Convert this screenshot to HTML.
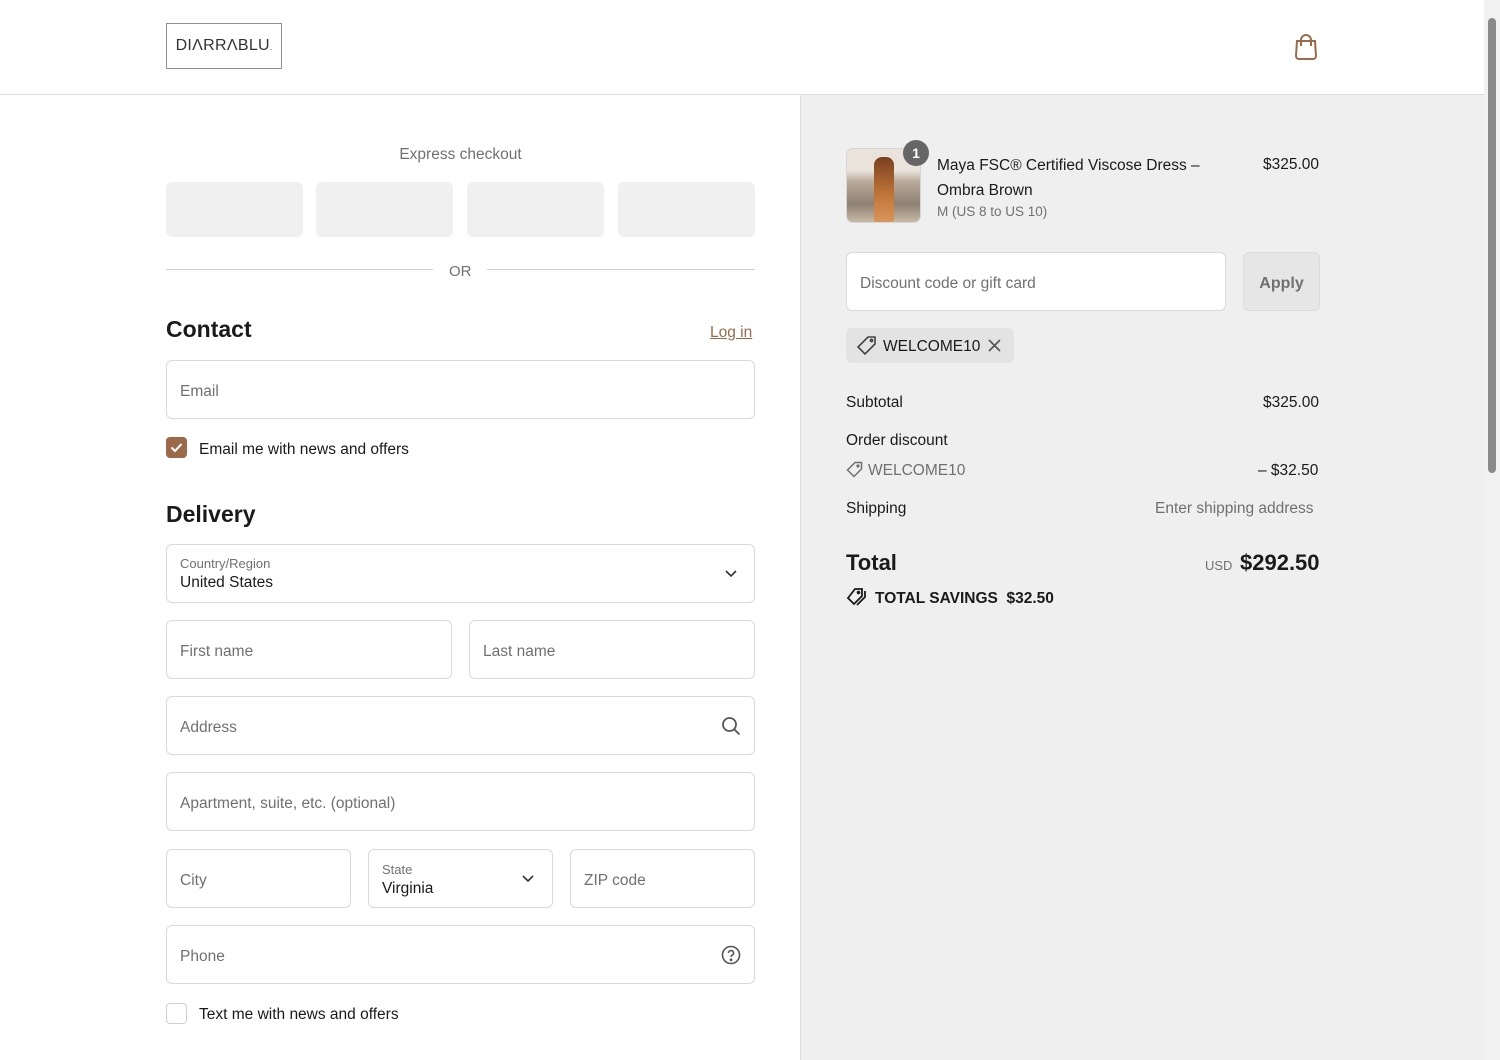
<!DOCTYPE html>
<html><head><meta charset="utf-8"><style>
*{box-sizing:border-box;margin:0;padding:0}
body{width:1500px;height:1060px;overflow:hidden;font-family:"Liberation Sans",sans-serif;color:#1a1a1a;background:#fff;position:relative;font-size:15px}
.a{position:absolute}
.t{margin-top:2px}
.hdr{left:0;top:0;width:1484px;height:95px;border-bottom:1px solid #dedede;background:#fff}
.logo{left:166px;top:23px;width:116px;height:46px;border:1.5px solid #8f8f8f;font-size:16px;letter-spacing:0.3px;color:#333;text-align:center;line-height:44px}
.right{left:800px;top:95px;width:684px;height:965px;background:#efefef;border-left:1px solid #dedede}
.sb{left:1484px;top:0;width:16px;height:1060px;background:#f1f1f1}
.thumb{left:1488px;top:18px;width:8px;height:455px;background:#8a8a8a;border-radius:4px}
.exp{top:182px;width:137px;height:55px;background:#f0f0f0;border-radius:6px}
.inp{border:1px solid #d9d9d9;border-radius:6px;background:#fff;height:59px;padding-left:13px;line-height:61px;color:#707070;font-size:15.5px}
h2{font-size:23px;font-weight:bold}
.lbl{font-size:13px;color:#707070}
.g{color:#707070}
</style></head><body>
<div class="a hdr"></div>
<div class="a logo">DIΛRRΛBLU<span style="font-size:8px">.</span></div>
<svg class="a" style="left:1293px;top:33px" width="26" height="27" viewBox="0 0 26 27" fill="none" stroke="#9b6a4a" stroke-width="2"><path d="M4 8h18l1 15a3 3 0 0 1-3 3H6a3 3 0 0 1-3-3z"/><path d="M8 13v-6a5 5 0 0 1 10 0v6"/></svg>

<div class="a g" style="left:166px;top:146px;width:589px;text-align:center;font-size:15.5px">Express checkout</div>
<div class="a exp" style="left:166px"></div><div class="a exp" style="left:316px"></div><div class="a exp" style="left:467px"></div><div class="a exp" style="left:618px"></div>
<div class="a" style="left:166px;top:269px;width:267px;border-top:1px solid #d0d0d0"></div>
<div class="a" style="left:487px;top:269px;width:268px;border-top:1px solid #d0d0d0"></div>
<div class="a g" style="left:449px;top:263px;font-size:15px">OR</div>

<h2 class="a" style="left:166px;top:316px">Contact</h2>
<div class="a" style="left:710px;top:324px;color:#9b6a4a;text-decoration:underline;font-size:15.5px">Log in</div>
<div class="a inp" style="left:166px;top:360px;width:589px">Email</div>
<div class="a" style="left:166px;top:437px;width:21px;height:21px;background:#9b6a4a;border-radius:4px"><svg width="21" height="21" viewBox="0 0 21 21"><path d="M5.5 10.5l3.5 3.5 6.5-7" stroke="#fff" stroke-width="2" fill="none"/></svg></div>
<div class="a" style="left:199px;top:441px;font-size:15.5px">Email me with news and offers</div>

<h2 class="a" style="left:166px;top:501px">Delivery</h2>
<div class="a inp" style="left:166px;top:544px;width:589px;line-height:normal;padding-top:11px"><div class="lbl">Country/Region</div><div style="color:#1a1a1a;margin-top:3px;font-size:15.5px">United States</div></div>
<svg class="a" style="left:725px;top:570px" width="12" height="8"><path d="M1 1l5 5 5-5" stroke="#333" stroke-width="1.6" fill="none"/></svg>
<div class="a inp" style="left:166px;top:620px;width:286px">First name</div>
<div class="a inp" style="left:469px;top:620px;width:286px">Last name</div>
<div class="a inp" style="left:166px;top:696px;width:589px">Address</div>
<svg class="a" style="left:721px;top:716px" width="20" height="20" fill="none" stroke="#555" stroke-width="1.8"><circle cx="8.5" cy="8.5" r="6.5"/><path d="M13.5 13.5l5 5"/></svg>
<div class="a inp" style="left:166px;top:772px;width:589px">Apartment, suite, etc. (optional)</div>
<div class="a inp" style="left:166px;top:849px;width:185px">City</div>
<div class="a inp" style="left:368px;top:849px;width:185px;line-height:normal;padding-top:12px"><div class="lbl">State</div><div style="color:#1a1a1a;margin-top:3px;font-size:15.5px">Virginia</div></div>
<svg class="a" style="left:522px;top:875px" width="12" height="8"><path d="M1 1l5 5 5-5" stroke="#333" stroke-width="1.6" fill="none"/></svg>
<div class="a inp" style="left:570px;top:849px;width:185px">ZIP code</div>
<div class="a inp" style="left:166px;top:925px;width:589px">Phone</div>
<svg class="a" style="left:721px;top:945px" width="20" height="20" fill="none" stroke="#555" stroke-width="1.6"><circle cx="10" cy="10" r="8.5"/><path d="M7.5 8a2.5 2.5 0 1 1 3.5 2.3c-.7.4-1 .9-1 1.7"/><circle cx="10" cy="14.8" r=".6" fill="#555"/></svg>
<div class="a" style="left:166px;top:1003px;width:21px;height:21px;border:1px solid #cfcfcf;border-radius:4px;background:#fff"></div>
<div class="a" style="left:199px;top:1006px;font-size:15.5px">Text me with news and offers</div>

<div class="a right"></div>
<div class="a" style="left:846px;top:148px;width:75px;height:75px;border:1px solid #d6d6d6;border-radius:7px;background:linear-gradient(#e9e3dc 0 30%,#b9a99a 45%,#8d8073 75%,#c9b9a6);overflow:hidden"><div style="position:absolute;left:27px;top:8px;width:20px;height:65px;background:linear-gradient(#7a3f1e,#c2773a 60%,#d9955a);border-radius:8px 8px 2px 2px"></div></div>
<div class="a" style="left:903px;top:140px;width:26px;height:26px;border-radius:13px;background:#666;color:#fff;font-weight:bold;text-align:center;line-height:26px;font-size:14px">1</div>
<div class="a" style="left:937px;top:153px;font-size:15.5px;line-height:25px;width:300px">Maya FSC® Certified Viscose Dress –<br>Ombra Brown</div>
<div class="a g" style="left:937px;top:204px;font-size:13.5px">M (US 8 to US 10)</div>
<div class="a" style="left:1263px;top:156px;font-size:15.5px">$325.00</div>
<div class="a inp" style="left:846px;top:252px;width:380px;height:59px">Discount code or gift card</div>
<div class="a" style="left:1243px;top:252px;width:77px;height:59px;background:#e6e6e6;border:1px solid #dcdcdc;border-radius:6px;text-align:center;line-height:61px;color:#707070;font-weight:bold;font-size:16px">Apply</div>
<div class="a" style="left:846px;top:328px;width:168px;height:35px;background:#e3e3e3;border-radius:6px"></div>
<svg class="a" style="left:856px;top:335px" width="22" height="22" fill="none" stroke="#444" stroke-width="1.6"><path d="M12 2h7v7l-10 10-7-7z"/><circle cx="15.5" cy="5.5" r="1.1"/></svg>
<div class="a" style="left:883px;top:338px;font-size:15.5px">WELCOME10</div>
<svg class="a" style="left:988px;top:339px" width="13" height="13" stroke="#555" stroke-width="1.6"><path d="M1 1l11 11M12 1L1 12"/></svg>
<div class="a" style="left:846px;top:394px;font-size:15.5px">Subtotal</div>
<div class="a" style="left:1263px;top:394px;font-size:15.5px">$325.00</div>
<div class="a" style="left:846px;top:432px;font-size:15.5px">Order discount</div>
<svg class="a" style="left:846px;top:461px" width="17" height="17" fill="none" stroke="#707070" stroke-width="1.5"><path d="M9 1.5h6.5V8L8 15.5 1.5 9z"/><circle cx="12" cy="5" r=".9"/></svg>
<div class="a g" style="left:868px;top:462px;font-size:15.5px">WELCOME10</div>
<div class="a" style="left:1258px;top:462px;font-size:15.5px">– $32.50</div>
<div class="a" style="left:846px;top:500px;font-size:15.5px">Shipping</div>
<div class="a g" style="left:1155px;top:500px;font-size:15.5px">Enter shipping address</div>
<div class="a" style="left:846px;top:550px;font-size:22px;font-weight:bold">Total</div>
<div class="a g" style="left:1205px;top:558px;font-size:13px">USD</div>
<div class="a" style="left:1240px;top:550px;font-size:22px;font-weight:bold">$292.50</div>
<svg class="a" style="left:846px;top:587px" width="22" height="20" fill="none" stroke="#1a1a1a" stroke-width="1.8"><path d="M9 2h7v7l-8 8-6-6z"/><circle cx="12.5" cy="5.5" r=".9"/><path d="M19 4v6l-8 8"/></svg>
<div class="a" style="left:875px;top:590px;font-size:15.5px;font-weight:bold">TOTAL SAVINGS&nbsp; $32.50</div>

<div class="a sb"></div><div class="a thumb"></div>
</body></html>
